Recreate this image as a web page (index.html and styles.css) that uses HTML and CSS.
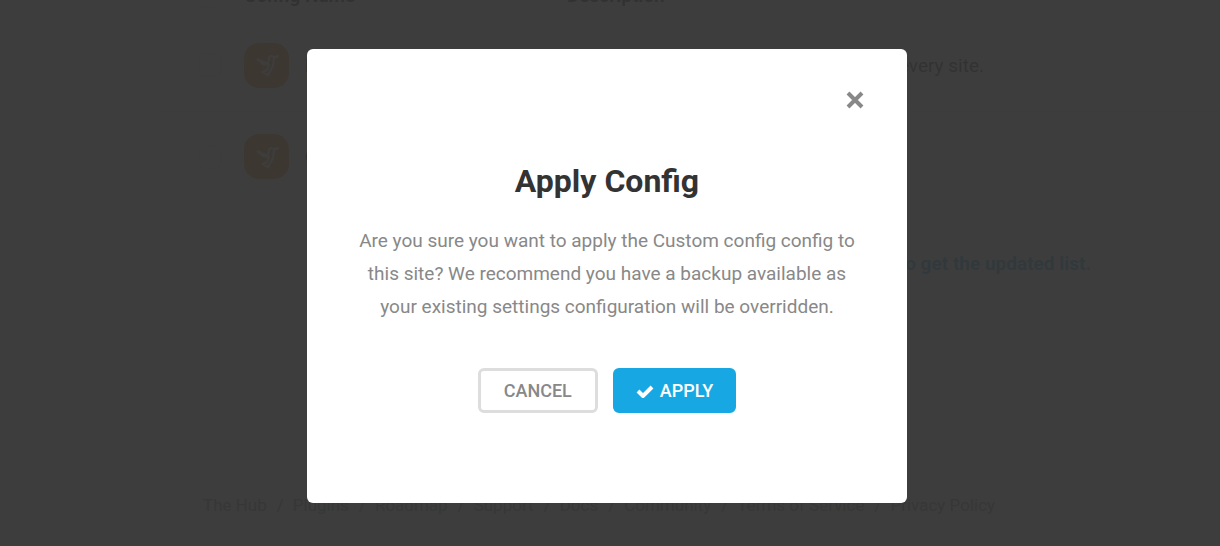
FILE: index.html
```html
<!DOCTYPE html>
<html lang="en">

<head>
  <meta charset="utf-8">
  <title>Apply Config</title>
  <link rel="stylesheet" href="styles.css">
</head>

<body>
  <svg class="sprite" aria-hidden="true">
    <symbol id="bird" viewBox="0 0 24 24">
      <path d="M2 6l11 5 1-7 2-1 3 1 5-1-5 2-1 8-5 9-5-3 4-2 2-5-6-1z" />
    </symbol>
  </svg>

  <div class="page" inert>
    <main class="box">
      <table class="configs">
        <thead>
          <tr>
            <th class="check"><input type="checkbox" aria-label="Select all configs"></th>
            <th class="name">Config Name</th>
            <th>Description</th>
          </tr>
        </thead>
        <tbody>
          <tr>
            <td class="check"><input type="checkbox" aria-label="Select Default config"></td>
            <td class="name">
              <div class="config">
                <span class="logo"><svg><use href="#bird" /></svg></span>
                Default config
              </div>
            </td>
            <td>Recommended performance config for every site.</td>
          </tr>
          <tr>
            <td class="check"><input type="checkbox" aria-label="Select Custom config"></td>
            <td class="name">
              <div class="config">
                <span class="logo"><svg><use href="#bird" /></svg></span>
                Custom config
              </div>
            </td>
            <td></td>
          </tr>
        </tbody>
      </table>
      <p class="recheck">Created or updated configs via the Hub? <a href="#">Re-check to get the updated list.</a></p>
    </main>

    <footer>
      <ul class="links">
        <li><a href="#">The Hub</a></li>
        <li><a href="#">Plugins</a></li>
        <li><a href="#">Roadmap</a></li>
        <li><a href="#">Support</a></li>
        <li><a href="#">Docs</a></li>
        <li><a href="#">Community</a></li>
        <li><a href="#">Terms of Service</a></li>
        <li><a href="#">Privacy Policy</a></li>
      </ul>
    </footer>
  </div>

  <div class="overlay">
    <div class="modal" role="dialog" aria-modal="true" aria-labelledby="title" aria-describedby="desc">
      <button type="button" class="close" aria-label="Close">
        <svg viewBox="0 0 18 18"><path d="M2 2l14 14M16 2L2 16" /></svg>
      </button>
      <h1 id="title">Apply Config</h1>
      <p id="desc">Are you sure you want to apply the Custom config config to this site? We recommend you have a backup available as your existing settings configuration will be overridden.</p>
      <div class="actions">
        <button type="button" class="btn ghost">CANCEL</button>
        <button type="button" class="btn blue">
          <svg viewBox="0 0 18 14"><path d="M2 7l5 5 9-9" /></svg>
          APPLY
        </button>
      </div>
    </div>
  </div>
</body>

</html>
```

FILE: styles.css
```css
* {
  box-sizing: border-box;
}

body {
  margin: 0;
  background: #f1f1f1;
  color: #888;
  font-family: Roboto, "Liberation Sans", sans-serif;
  font-size: 19px;
}

a { color: inherit; text-decoration: none; }

.sprite {
  display: none;
}

/* page behind the dialog */

.page {
  height: 100vh;
  overflow: hidden;
}

.box {
  margin: -29px 0 0 154px;
  padding-bottom: 48px;
  background: #fff;
  border-radius: 6px 0 0 6px;
}

.configs {
  width: 100%;
  border-collapse: collapse;
  table-layout: fixed;
}

.configs th {
  height: 49px;
  padding: 0;
  color: #333;
  font-weight: 700;
  text-align: left;
}

.configs td {
  height: 91px;
  padding: 0;
  color: #333;
}

.configs tbody tr + tr { border-top: 1px solid #e6e6e6; }

.configs .check {
  width: 90px;
  padding-left: 44px;
}

.configs .name {
  width: 323px;
  font-weight: 700;
}

.check input {
  appearance: none;
  display: block;
  width: 24px;
  height: 24px;
  margin: 0;
  border: 1px solid #ddd;
  border-radius: 6px;
}

.config {
  display: flex;
  align-items: center;
  gap: 16px;
}

.logo {
  display: flex;
  align-items: center;
  justify-content: center;
  width: 45px;
  height: 45px;
  border-radius: 15px;
  background: #ff8430;
}

.logo svg {
  width: 24px;
  height: 24px;
  fill: none;
  stroke: #fff;
  stroke-width: 2;
}

.recheck {
  margin: 48px 129px 0 0;
  line-height: 28px;
  text-align: right;
}

.recheck a {
  color: #17a8e3;
  font-weight: 700;
}

footer {
  padding: 169px 16px 0 203px;
}

.links {
  display: flex;
  margin: 0;
  padding: 0;
  list-style: none;
  font-size: 17px;
  line-height: 20px;
  white-space: nowrap;
}

.links li + li::before {
  content: "/";
  margin: 0 9px 0 10px;
}

/* dialog */

.overlay {
  position: fixed;
  inset: 0;
  display: flex;
  align-items: center;
  justify-content: center;
  padding: 6px 6px 0 0;
  background: rgba(51, 51, 51, .95);
}

.modal {
  display: flex;
  flex-direction: column;
  align-items: center;
  width: 600px;
  max-width: 100%;
  padding: 36px 37px 90px;
  border-radius: 6px;
  background: #fff;
  text-align: center;
}

.modal button {
  font: inherit;
  cursor: pointer;
}

.modal svg {
  fill: none;
  stroke: currentColor;
}

.close {
  display: flex;
  align-self: flex-end;
  padding: 6px;
  border: 0;
  background: none;
  color: #888;
}

.close svg {
  width: 18px;
  height: 18px;
  stroke-width: 4;
}

h1 {
  margin: 46px 0 23px;
  color: #333;
  font-size: 32px;
  font-weight: 700;
  line-height: 40px;
}

.modal p {
  max-width: 500px;
  margin: 0;
  line-height: 33px;
}

.actions {
  display: flex;
  gap: 15px;
  margin-top: 45px;
}

.modal .btn {
  display: flex;
  align-items: center;
  gap: 6px;
  height: 45px;
  padding: 0 20px;
  border: 3px solid #ddd;
  border-radius: 6px;
  background: none;
  color: #888;
  font-size: 18px;
  font-weight: 500;
}

.modal .ghost {
  padding: 0 23px;
}

.modal .blue {
  border-color: #17a8e3;
  background: #17a8e3;
  color: #fff;
}

.btn svg {
  width: 18px;
  height: 14px;
  stroke-width: 4;
}
```
